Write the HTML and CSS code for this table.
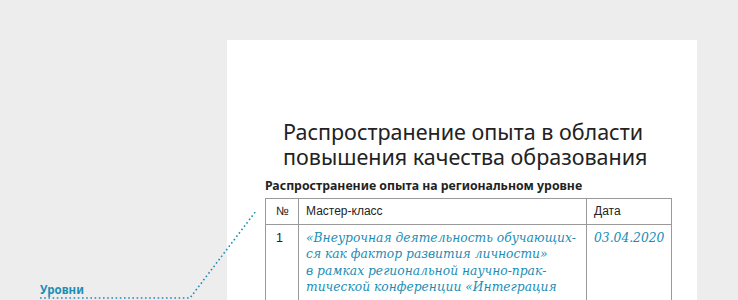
FILE: index.html
```html
<!DOCTYPE html>
<html lang="ru">
<head>
<meta charset="utf-8">
<link rel="stylesheet" href="styles.css">
</head>
<body>
<div class="canvas">
  <div class="note">
    <span class="note-label">Уровни</span>
  </div>
  <svg class="leader" width="260" height="100" viewBox="0 0 260 100">
    <polyline points="40,87 190,87 256,0" fill="none" stroke="#1b8db5" stroke-width="1.6" stroke-dasharray="1.6 2.6"/>
  </svg>
  <div class="page">
    <h1 class="title">Распространение опыта в области<br>повышения качества образования</h1>
    <h2 class="subtitle">Распространение опыта на региональном уровне</h2>
    <table class="grid">
      <colgroup>
        <col class="w-num">
        <col class="w-name">
        <col class="w-date">
      </colgroup>
      <thead>
        <tr>
          <th class="c-num">№</th>
          <th>Мастер-класс</th>
          <th>Дата</th>
        </tr>
      </thead>
      <tbody>
        <tr>
          <td class="c-num">1</td>
          <td class="em">«Внеурочная деятельность обучающих-<br>ся как фактор развития личности»<br>в рамках региональной научно-прак-<br>тической конференции «Интеграция<br>ресурсов социально-культурного про-<br>странства и образования»</td>
          <td class="em">03.04.2020</td>
        </tr>
      </tbody>
    </table>
  </div>
</div>
</body>
</html>
```

FILE: styles.css
```css
html, body {
  margin: 0;
  padding: 0;
  background: #ededed;
  height: 300px;
  overflow: hidden;
}
.canvas {
  position: relative;
  width: 738px;
  height: 300px;
  display: flex;
  align-items: flex-start;
}
.note {
  width: 227px;
  padding-top: 280px;
  padding-left: 40px;
  box-sizing: border-box;
  flex: none;
}
.note-label {
  font-family: "Noto Sans", sans-serif;
  font-weight: 700;
  font-size: 11.5px;
  line-height: 16px;
  color: #1b8db5;
}
.leader {
  position: absolute;
  left: 0;
  top: 211px;
}
.page {
  margin-top: 40px;
  width: 470px;
  height: 280px;
  background: #fff;
  box-sizing: border-box;
  padding: 79px 0 0 38px;
  flex: none;
}
.title {
  margin: 0 0 0 18px;
  font-family: "Noto Sans", sans-serif;
  font-weight: 400;
  font-size: 21.5px;
  line-height: 25px;
  color: #222;
}
.subtitle {
  margin: 8px 0 4px 0;
  font-family: "Noto Sans", sans-serif;
  font-weight: 700;
  font-size: 12.3px;
  line-height: 17px;
  color: #222;
}
.grid {
  border-collapse: collapse;
  width: 406px;
  table-layout: fixed;
}
.w-num { width: 33px; }
.w-name { width: 288px; }
.w-date { width: 85px; }
.grid th, .grid td {
  border: 1px solid #9a9a9a;
  text-align: left;
  vertical-align: top;
  padding: 0 7px;
}
.grid th {
  font-family: "Liberation Sans", Arial, sans-serif;
  font-weight: 400;
  font-size: 12px;
  line-height: 25px;
  color: #222;
}
.grid td {
  font-family: "Liberation Sans", Arial, sans-serif;
  font-size: 12.5px;
  color: #222;
  padding-top: 5px;
  line-height: 16.3px;
}
.grid .c-num { padding-left: 10px; }
.grid td.em {
  font-family: "DejaVu Serif", serif;
  font-style: italic;
  font-size: 12.3px;
  color: #1b8db5;
}
```
